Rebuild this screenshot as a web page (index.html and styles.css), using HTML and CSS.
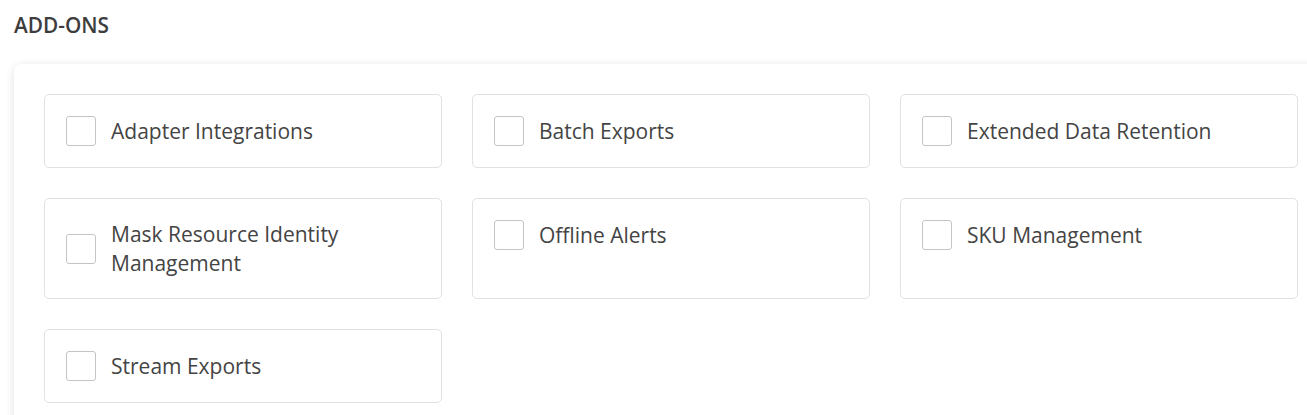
FILE: index.html
```html
<!DOCTYPE html>
<html lang="en">
<head>
    <meta charset="UTF-8">
    <meta name="viewport" content="width=device-width, initial-scale=1.0">
    <title>Add-ons</title>
    <link rel="stylesheet" href="styles.css">
</head>
<body>
    <main>
        <h2 class="section-title">ADD-ONS</h2>
        <div class="addons-card">
            <div class="addon">
                <label class="addon-label">
                    <input type="checkbox" name="adapter_integrations">
                    <span class="checkbox"></span>
                    <span class="addon-name">Adapter Integrations</span>
                </label>
            </div>
            <div class="addon">
                <label class="addon-label">
                    <input type="checkbox" name="batch_exports">
                    <span class="checkbox"></span>
                    <span class="addon-name">Batch Exports</span>
                </label>
            </div>
            <div class="addon">
                <label class="addon-label">
                    <input type="checkbox" name="extended_data_retention">
                    <span class="checkbox"></span>
                    <span class="addon-name">Extended Data Retention</span>
                </label>
            </div>
            <div class="addon">
                <label class="addon-label">
                    <input type="checkbox" name="mask_resource_identity">
                    <span class="checkbox"></span>
                    <span class="addon-name">Mask Resource Identity Management</span>
                </label>
            </div>
            <div class="addon">
                <label class="addon-label">
                    <input type="checkbox" name="offline_alerts">
                    <span class="checkbox"></span>
                    <span class="addon-name">Offline Alerts</span>
                </label>
            </div>
            <div class="addon">
                <label class="addon-label">
                    <input type="checkbox" name="sku_management">
                    <span class="checkbox"></span>
                    <span class="addon-name">SKU Management</span>
                </label>
            </div>
            <div class="addon">
                <label class="addon-label">
                    <input type="checkbox" name="stream_exports">
                    <span class="checkbox"></span>
                    <span class="addon-name">Stream Exports</span>
                </label>
            </div>
        </div>
    </main>
</body>
</html>
```

FILE: styles.css
```css
html, body {
    margin: 0;
    overflow: hidden;
    background-color: #fff;
    font-family: 'Open Sans', 'Noto Sans', sans-serif;
    color: #444;
    -webkit-font-smoothing: antialiased;
}
main {
    padding: 0 14px;
}
.section-title {
    margin: 0;
    padding: 11px 0 25px;
    font-size: 20.8px;
    font-weight: 600;
    line-height: 28px;
    color: #3d3d3d;
}
.addons-card {
    display: grid;
    grid-template-columns: repeat(3, 398px);
    gap: 30px;
    width: max-content;
    padding: 30px;
    background: #fff;
    border-radius: 8px;
    box-shadow: 0 2px 10px rgba(0, 0, 0, 0.12);
}
.addon {
    padding: 21px 20px 21px 21px;
    border: 1px solid #e2e2e6;
    border-radius: 5px;
}
.addon-label {
    display: flex;
    align-items: center;
    cursor: pointer;
    user-select: none;
}
.addon-label input {
    position: absolute;
    opacity: 0;
    width: 0;
    height: 0;
}
.checkbox {
    flex: none;
    width: 28px;
    height: 28px;
    border: 1px solid #c4c4c4;
    border-radius: 3px;
    background: #fff;
}
.addon-label input:checked ~ .checkbox {
    background: #2b7de9;
    border-color: #2b7de9;
}
.addon-name {
    margin-left: 15px;
    font-size: 21px;
    line-height: 28.5px;
    color: #444;
}
```
